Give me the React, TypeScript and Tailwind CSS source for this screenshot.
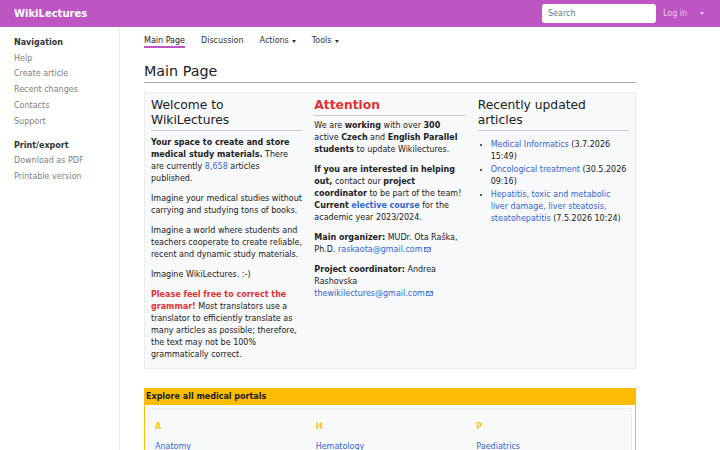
import { ReactNode } from 'react';

const navLinks = ['Help', 'Create article', 'Recent changes', 'Contacts', 'Support'];
const printLinks = ['Download as PDF', 'Printable version'];

const recent = [
  { title: 'Medical Informatics', date: '(3.7.2026 15:49)' },
  { title: 'Oncological treatment', date: '(30.5.2026 09:16)' },
  { title: 'Hepatitis, toxic and metabolic liver damage, liver steatosis, steatohepatitis', date: '(7.5.2026 10:24)' },
];

const portals = [
  { letter: 'A', items: ['Anatomy'] },
  { letter: 'H', items: ['Hematology'] },
  { letter: 'P', items: ['Paediatrics'] },
];

function Caret({ className = '' }: { className?: string }) {
  return (
    <svg width="4" height="3" viewBox="0 0 4 3" className={`shrink-0 ${className}`}>
      <path d="M0 0 H4 L2 3 Z" fill="currentColor" />
    </svg>
  );
}

function Mail() {
  return (
    <svg width="7" height="5" viewBox="0 0 7 5" className="ml-[1px] inline-block align-baseline">
      <rect x="0.5" y="0.5" width="6" height="4" fill="none" stroke="#3366cc" strokeWidth="0.8" />
      <path d="M0.5 0.8 L3.5 3 L6.5 0.8" fill="none" stroke="#3366cc" strokeWidth="0.8" />
    </svg>
  );
}

function ColHead({ children, className = '' }: { children: ReactNode; className?: string }) {
  return (
    <h2 className={`text-[12.3px] leading-[15px] pb-[2px] mb-[4px] border-b border-[#c8ccd1] ${className}`}>
      {children}
    </h2>
  );
}

const A = ({ children }: { children: ReactNode }) => <a className="text-[#3366cc]">{children}</a>;

export default function App() {
  return (
    <div className="min-h-screen bg-white font-['DejaVu_Sans',sans-serif] text-[#202122]">
      {/* Top bar */}
      <header className="h-[27px] bg-[#bd55c2] flex items-center pl-[14px]">
        <span className="text-white font-bold text-[10px]">WikiLectures</span>
        <div className="ml-auto w-[114px] h-[19px] rounded-[3px] bg-white flex items-center pl-[6px] text-[8px] text-[#72777d]">
          Search
        </div>
        <span className="ml-[7px] w-[37px] text-[8px] text-white/70">Log in</span>
        <Caret className="text-white/70" />
        <span className="w-[16px] shrink-0" />
      </header>

      <div className="flex">
        {/* Sidebar */}
        <aside className="w-[120px] shrink-0 min-h-[423px] border-r border-[#eaecf0] pl-[14px] pt-[8px] text-[8px] leading-[15.7px]">
          <div className="font-bold text-[#333]">Navigation</div>
          {navLinks.map((l) => (
            <div key={l} className="text-[#808080]">{l}</div>
          ))}
          <div className="font-bold text-[#333] mt-[8.5px]">Print/export</div>
          {printLinks.map((l) => (
            <div key={l} className="text-[#808080]">{l}</div>
          ))}
        </aside>

        {/* Main */}
        <main className="flex-1 pl-[24px] pr-[84px]">
          <nav className="pt-[9px] flex gap-[16px] text-[8px] leading-[10px]">
            <span className="border-b-2 border-[#bd55c2]">Main Page</span>
            <span className="border-b-2 border-transparent text-[#333]">Discussion</span>
            <span className="border-b-2 border-transparent text-[#333] flex items-center gap-[3px]">
              Actions
              <Caret />
            </span>
            <span className="border-b-2 border-transparent text-[#333] flex items-center gap-[3px]">
              Tools
              <Caret />
            </span>
          </nav>

          <h1 className="mt-[13px] text-[14.3px] leading-[20px] pb-[1px] border-b border-[#a2a9b1]">Main Page</h1>

          {/* Intro box */}
          <div className="mt-[9px] border border-[#eaecf0] bg-[#f8f9fa] pt-[5px] pb-[1px] grid grid-cols-3 text-[8px] leading-[12px]">
            <div className="px-[6px]">
              <ColHead>Welcome to WikiLectures</ColHead>
              <p className="mb-[8px] pt-[2px]">
                <b>Your space to create and store medical study materials.</b> There are currently <A>8,658</A> articles published.
              </p>
              <p className="mb-[8px]">Imagine your medical studies without carrying and studying tons of books.</p>
              <p className="mb-[8px]">
                Imagine a world where students and teachers cooperate to create reliable, recent and dynamic study materials.
              </p>
              <p className="mb-[8px]">Imagine WikiLectures. :-)</p>
              <p className="mb-[6px]">
                <b className="text-[#d33]">Please feel free to correct the grammar!</b> Most translators use a translator to
                efficiently translate as many articles as possible; therefore, the text may not be 100% grammatically correct.
              </p>
            </div>

            <div className="px-[6px]">
              <ColHead className="font-bold text-[#d33]">Attention</ColHead>
              <p className="mb-[8px]">
                We are <b>working</b> with over <b>300</b> active <b>Czech</b> and <b>English Parallel students</b> to update
                Wikilectures.
              </p>
              <p className="mb-[8px]">
                <b>If you are interested in helping out,</b> contact our <b>project coordinator</b> to be part of the team!{' '}
                <b>Current</b>{' '}
                <a className="text-[#3366cc] font-bold">elective course</a> for the academic year 2023/2024.
              </p>
              <p className="mb-[8px]">
                <b>Main organizer:</b> MUDr. Ota Raška, Ph.D.{' '}
                <A>
                  raskaota@gmail.com
                  <Mail />
                </A>
              </p>
              <p className="mb-[8px]">
                <b>Project coordinator:</b> Andrea Rashovska{' '}
                <A>
                  thewikilectures@gmail.com
                  <Mail />
                </A>
              </p>
            </div>

            <div className="px-[6px]">
              <ColHead>Recently updated articles</ColHead>
              <ul className="pt-[4px] pl-[13px] list-disc">
                {recent.map((r) => (
                  <li key={r.title} className="mb-[1px]">
                    <A>{r.title}</A> {r.date}
                  </li>
                ))}
              </ul>
            </div>
          </div>

          {/* Portals */}
          <div className="mt-[19px] border border-[#fcbc04] text-[8px] leading-[12px]">
            <div className="bg-[#fcbc04] h-[16px] leading-[16px] pl-[1px] font-bold">Explore all medical portals</div>
            <div className="mx-[3px] mt-[3px] border border-[#eaecf0] bg-[#f8f9fa] pt-[12px] pb-[10px] grid grid-cols-3">
              {portals.map((p) => (
                <div key={p.letter} className="pl-[6px]">
                  <div className="font-bold text-[#fcc419] mb-[8px]">{p.letter}</div>
                  {p.items.map((i) => (
                    <div key={i}>
                      <A>{i}</A>
                    </div>
                  ))}
                </div>
              ))}
            </div>
          </div>
        </main>
      </div>
    </div>
  );
}
